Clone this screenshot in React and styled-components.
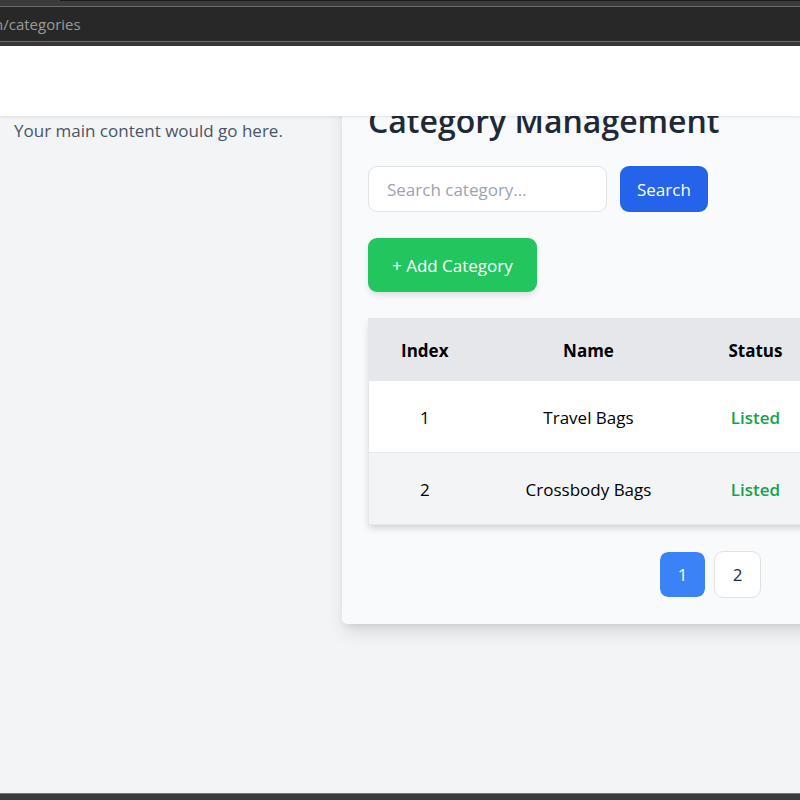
import React from "react";
import styled, { createGlobalStyle, css } from "styled-components";

const GlobalStyle = createGlobalStyle`
  *, *::before, *::after { box-sizing: border-box; }
  body {
    margin: 0;
    overflow: hidden;
    background: #f3f4f6;
    color: #000;
    font-family: "Open Sans", "Noto Sans", sans-serif;
    font-size: 17px;
    line-height: 26px;
  }
  button, input { font: inherit; }
`;

const Screen = styled.div`
  display: flex;
  flex-direction: column;
  height: 100vh;
  overflow: hidden;
`;

const TabStrip = styled.div`
  flex: none;
  height: 6px;
  background: #3b3b3b;
  display: flex;
  justify-content: flex-end;
`;

const TabStripGap = styled.div`
  width: calc(100% - 60px);
  height: 1px;
  background: #1c1c1c;
`;

const AddressBar = styled.div`
  flex: none;
  display: flex;
  align-items: center;
  height: 36px;
  background: #282828;
  border-top: 1px solid #6a6a6a;
  border-bottom: 1px solid #6a6a6a;
  color: #9b9b9b;
  font-size: 15px;
  overflow: hidden;
`;

const Address = styled.span`
  margin-left: -6px;
  white-space: nowrap;
`;

const ChromeEdge = styled.div`
  flex: none;
  height: 4px;
  background: #3a3739;
`;

const Header = styled.header`
  flex: none;
  height: 70px;
  background: #fff;
  box-shadow: 0 1px 3px rgba(0, 0, 0, 0.1);
  z-index: 1;
`;

const Content = styled.main`
  flex: 1;
  min-height: 0;
  display: flex;
  align-items: flex-start;
  overflow: hidden;
`;

const Intro = styled.p`
  flex: none;
  width: 342px;
  margin: 0;
  padding: 2px 14px;
  color: #4b5563;
`;

const Panel = styled.section`
  flex: 1 0 736px;
  margin-top: -24px;
  padding: 8px 26px 26px;
  background: #f9fafb;
  border-radius: 5px;
  box-shadow: 0 11px 17px -2px rgba(0, 0, 0, 0.1), 0 4px 7px -2px rgba(0, 0, 0, 0.08);
`;

const Title = styled.h1`
  margin: 0 0 24px;
  color: #1f2937;
  font-size: 32px;
  font-weight: 600;
  line-height: 42px;
`;

const SearchForm = styled.form`
  display: flex;
  gap: 13px;
  margin-bottom: 26px;
`;

const SearchInput = styled.input`
  width: 239px;
  height: 46px;
  padding: 0 18px;
  border: 1px solid #dfe2e7;
  border-radius: 9px;
  background: #fff;
  &::placeholder { color: #9ca3af; opacity: 1; }
`;

const Button = styled.button`
  border: 0;
  border-radius: 9px;
  color: #fff;
  cursor: pointer;
  ${({ $kind }) =>
    $kind === "add"
      ? css`
          height: 54px;
          padding: 1px 24px 0;
          background: #22c55e;
          box-shadow: 0 4px 6px -1px rgba(0, 0, 0, 0.12);
        `
      : css`
          height: 46px;
          padding: 1px 17px 0;
          background: #2563eb;
        `}
`;

const Table = styled.table`
  width: 100%;
  margin: 26px 0;
  table-layout: fixed;
  border-collapse: collapse;
  border: 1px solid #e5e7eb;
  background: #fff;
  text-align: center;
  box-shadow: 0 4px 7px -1px rgba(0, 0, 0, 0.16);
`;

const Column = styled.col`
  width: ${({ $width }) => $width};
`;

const HeadCell = styled.th`
  height: 62px;
  padding: 2px 0 0;
  background: #e5e7eb;
  font-weight: 700;
`;

const Row = styled.tr`
  height: 72px;
  border-top: 1px solid #e5e7eb;
  background: ${({ $striped }) => ($striped ? "#f3f4f6" : "#fff")};
`;

const Cell = styled.td`
  padding: 2px 0 0;
`;

const Status = styled.span`
  color: #16a34a;
  font-weight: 600;
`;

const Pagination = styled.nav`
  display: flex;
  justify-content: center;
  gap: 8px;
`;

const PageButton = styled.button`
  width: 47px;
  height: 47px;
  padding: 1px 0 0;
  border: 1px solid ${({ $active }) => ($active ? "#f9fafb" : "#dfe2e7")};
  border-radius: 9px;
  background: ${({ $active }) => ($active ? "#3b82f6" : "#fff")};
  background-clip: padding-box;
  color: ${({ $active }) => ($active ? "#fff" : "#1f2937")};
  cursor: pointer;
`;

const BottomEdge = styled.footer`
  flex: none;
  height: 7px;
  background: #3a3a3a;
  border-top: 1px solid #777;
`;

const categories = [
  { index: 1, name: "Travel Bags", status: "Listed" },
  { index: 2, name: "Crossbody Bags", status: "Listed" },
];

export default function App() {
  return (
    <Screen>
      <GlobalStyle />
      <TabStrip><TabStripGap /></TabStrip>
      <AddressBar><Address>n/categories</Address></AddressBar>
      <ChromeEdge />
      <Header />
      <Content>
        <Intro>Your main content would go here.</Intro>
        <Panel>
          <Title>Category Management</Title>
          <SearchForm onSubmit={(event) => event.preventDefault()}>
            <SearchInput type="text" placeholder="Search category..." aria-label="Search category" />
            <Button type="submit">Search</Button>
          </SearchForm>
          <Button type="button" $kind="add">+ Add Category</Button>
          <Table>
            <colgroup>
              <Column $width="112px" />
              <Column $width="216px" />
              <Column $width="118px" />
              <Column $width="auto" />
            </colgroup>
            <thead>
              <tr>
                <HeadCell scope="col">Index</HeadCell>
                <HeadCell scope="col">Name</HeadCell>
                <HeadCell scope="col">Status</HeadCell>
                <HeadCell as="td" />
              </tr>
            </thead>
            <tbody>
              {categories.map((category, i) => (
                <Row key={category.index} $striped={i % 2 === 1}>
                  <Cell>{category.index}</Cell>
                  <Cell>{category.name}</Cell>
                  <Cell><Status>{category.status}</Status></Cell>
                  <Cell />
                </Row>
              ))}
            </tbody>
          </Table>
          <Pagination aria-label="Pages">
            <PageButton type="button" $active aria-current="page">1</PageButton>
            <PageButton type="button">2</PageButton>
          </Pagination>
        </Panel>
      </Content>
      <BottomEdge />
    </Screen>
  );
}
